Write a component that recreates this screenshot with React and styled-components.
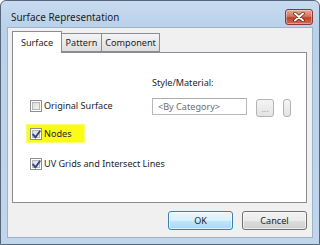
import React from 'react';
import styled, { createGlobalStyle } from 'styled-components';

const Global = createGlobalStyle`
  html, body { margin: 0; padding: 0; background: #ffffff; }
  body { font-family: "Noto Sans", "Open Sans", sans-serif; color: #1e1e1e; }
  * { box-sizing: border-box; }
`;

const Window = styled.div`
  width: 320px;
  height: 245px;
  border: 1px solid #56677b;
  border-radius: 6px 6px 0 0;
  background: linear-gradient(180deg, #c8dbf0 0px, #b9d1ea 26px, #c1d6ed 100%);
  display: flex;
  flex-direction: column;
  padding: 0 6px 6px 6px;
`;

const TitleBar = styled.div`
  height: 26px;
  display: flex;
  align-items: flex-start;
  justify-content: space-between;
  padding: 8px 0 0 4px;
`;

const Title = styled.div`
  font-size: 9.9px;
  line-height: 16px;
  color: #1b1b1b;
`;

const CloseButton = styled.div`
  width: 28px;
  height: 16px;
  border: 1px solid #8a3a2c;
  border-radius: 3px;
  background: linear-gradient(180deg, #e9a899 0%, #d5735f 45%, #c2412a 55%, #d46a52 100%);
  box-shadow: inset 0 0 0 1px rgba(255, 255, 255, 0.35);
  display: flex;
  align-items: center;
  justify-content: center;
`;

const Client = styled.div`
  flex: 1;
  background: #f0f0f0;
  border: 1px solid #9fb2c7;
  display: flex;
  flex-direction: column;
  padding: 3px 5px 7px 4px;
`;

const TabRow = styled.div`
  display: flex;
  align-items: flex-end;
`;

const Tab = styled.div`
  position: relative;
  font-size: 9.1px;
  line-height: 12px;
  padding: ${p => (p.$active ? '5px 8px 6px 8px' : '3px 3.5px 3px 3.5px')};
  border: 1px solid #898c95;
  border-bottom: ${p => (p.$active ? 'none' : '1px solid #898c95')};
  margin-left: ${p => (p.$first ? '0' : '-1px')};
  background: ${p => (p.$active ? '#ffffff' : 'linear-gradient(180deg, #f4f4f4 0%, #e9e9e9 50%, #dedede 100%)')};
  z-index: ${p => (p.$active ? 2 : 1)};
  margin-bottom: ${p => (p.$active ? '-1px' : '0')};
  height: ${p => (p.$active ? '22px' : '19px')};
  color: #1e1e1e;
`;

const Panel = styled.div`
  flex: 1;
  background: #ffffff;
  border: 1px solid #898c95;
  padding: 22px 0 0 0;
  display: flex;
  flex-direction: column;
`;

const TopRow = styled.div`
  display: flex;
  align-items: flex-start;
`;

const LeftCol = styled.div`
  width: 139px;
  padding: 25px 0 0 17px;
`;

const RightCol = styled.div`
  display: flex;
  flex-direction: column;
`;

const Label = styled.div`
  font-size: 9.1px;
  line-height: 15px;
  margin-bottom: 8px;
  color: #1e1e1e;
`;

const ControlRow = styled.div`
  display: flex;
  align-items: flex-start;
  gap: 9px;
`;

const Input = styled.div`
  width: 95px;
  height: 17px;
  border: 1px solid #b5b8bd;
  border-top-color: #abadb3;
  background: #ffffff;
  font-size: 9.1px;
  line-height: 15px;
  color: #6d6d6d;
  padding-left: 5px;
`;

const SmallButton = styled.div`
  margin-top: 1px;
  width: ${p => p.$w}px;
  height: 18px;
  border: 1px solid #b3b3b3;
  border-radius: 3px;
  background: linear-gradient(180deg, #f4f4f4 0%, #ececec 50%, #e3e3e3 100%);
  font-size: 9px;
  line-height: 18px;
  color: #9c9c9c;
  text-align: center;
`;

const CheckRow = styled.label`
  display: flex;
  align-items: center;
  gap: 2px;
  font-size: 9.1px;
  line-height: 12px;
  height: 12px;
  color: #1e1e1e;
  margin-left: ${p => p.$indent || 0}px;
  margin-top: ${p => p.$top || 0}px;
`;

const Highlight = styled.div`
  align-self: flex-start;
  margin: 8px 0 0 14px;
  padding: 3px 12px 2px 3px;
  background: #fbfb16;
  box-shadow: 0 0 1px 1px rgba(251, 251, 22, 0.6);
`;

const Box = styled.span`
  width: 12px;
  height: 12px;
  flex: none;
  border: 1px solid #8e8f8f;
  background: #ffffff;
  padding: 1px;
  display: flex;
`;

const BoxInner = styled.span`
  flex: 1;
  border: 1px solid #b4b8bf;
  background: linear-gradient(135deg, #dadbdd 0%, #f3f3f3 100%);
  display: flex;
  align-items: center;
  justify-content: center;
  position: relative;
`;

const ButtonRow = styled.div`
  display: flex;
  justify-content: flex-end;
  gap: 9px;
  margin-top: 8px;
`;

const DialogButton = styled.div`
  width: 65px;
  height: 19px;
  border: 1px solid ${p => (p.$default ? '#3c7fb1' : '#707070')};
  border-radius: 3px;
  background: ${p =>
    p.$default
      ? 'linear-gradient(180deg, #eaf6fd 0%, #d9f0fc 50%, #bee6fd 51%, #a7d9f5 100%)'
      : 'linear-gradient(180deg, #f2f2f2 0%, #ebebeb 50%, #dddddd 51%, #cfcfcf 100%)'};
  box-shadow: inset 0 0 0 1px rgba(255, 255, 255, 0.6);
  font-size: 9.1px;
  line-height: 17px;
  text-align: center;
  color: #1e1e1e;
`;

const Check = () => (
  <svg width="9" height="9" viewBox="0 0 9 9" style={{ position: 'absolute', left: -1, top: -1 }}>
    <path d="M1.2 4.6 L3.4 7.4 L7.8 1.2" fill="none" stroke="#34467a" strokeWidth="1.9" strokeLinecap="round" strokeLinejoin="round" />
  </svg>
);

const CheckBox = ({ checked }) => (
  <Box>
    <BoxInner>{checked && <Check />}</BoxInner>
  </Box>
);

export default function App() {
  return (
    <>
      <Global />
      <Window>
        <TitleBar>
          <Title>Surface Representation</Title>
          <CloseButton>
            <svg width="12" height="10" viewBox="0 0 12 10">
              <path d="M2 1.5 L10 8.5 M10 1.5 L2 8.5" stroke="#5a1f14" strokeWidth="3.4" strokeLinecap="round" />
              <path d="M2 1.5 L10 8.5 M10 1.5 L2 8.5" stroke="#ffffff" strokeWidth="2" strokeLinecap="round" />
            </svg>
          </CloseButton>
        </TitleBar>
        <Client>
          <TabRow>
            <Tab $active $first>Surface</Tab>
            <Tab>Pattern</Tab>
            <Tab>Component</Tab>
          </TabRow>
          <Panel>
            <TopRow>
              <LeftCol>
                <CheckRow>
                  <CheckBox />
                  Original Surface
                </CheckRow>
              </LeftCol>
              <RightCol>
                <Label>Style/Material:</Label>
                <ControlRow>
                  <Input>&lt;By Category&gt;</Input>
                  <SmallButton $w={18}>...</SmallButton>
                  <SmallButton $w={8} />
                </ControlRow>
              </RightCol>
            </TopRow>
            <Highlight>
              <CheckRow>
                <CheckBox checked />
                Nodes
              </CheckRow>
            </Highlight>
            <CheckRow $indent={17} $top={16}>
              <CheckBox checked />
              UV Grids and Intersect Lines
            </CheckRow>
          </Panel>
          <ButtonRow>
            <DialogButton $default>OK</DialogButton>
            <DialogButton>Cancel</DialogButton>
          </ButtonRow>
        </Client>
      </Window>
    </>
  );
}
